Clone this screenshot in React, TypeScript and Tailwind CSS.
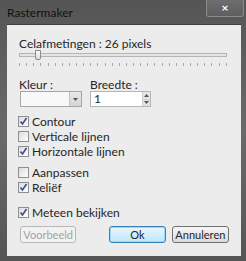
import React from "react";

const font = { fontFamily: 'Lato, "Open Sans", Arial, sans-serif' };

function Check({ checked, label }: { checked: boolean; label: string }) {
  return (
    <div className="flex items-center h-[15px]">
      <div className="w-[11px] h-[11px] border border-[#8e8f8f] bg-gradient-to-br from-[#dcdcdc] to-[#ffffff] flex items-center justify-center">
        {checked && (
          <svg width="9" height="9" viewBox="0 0 9 9">
            <path d="M1.5 4.5 L3.5 7 L7.5 1" stroke="#3b4d8c" strokeWidth="1.6" fill="none" />
          </svg>
        )}
      </div>
      <span className="ml-[3px] text-[12px] leading-[13px] text-[#262626]">{label}</span>
    </div>
  );
}

export default function App() {
  const ticks = Array.from({ length: 30 });
  return (
    <div
      className="w-[246px] h-[261px] bg-gradient-to-b from-[#555555] via-[#6a6a6a] to-[#555555] flex flex-col relative overflow-hidden"
      style={font}
    >
      {/* title bar */}
      <div className="h-[24px] flex items-center pl-[7px]">
        <span className="text-[12px] leading-[14px] text-[#111] mt-[1px]">Rastermaker</span>
      </div>
      {/* close button */}
      <div className="absolute left-[206px] top-0 w-[38px] h-[17px] border border-[#8a8a8a] border-t-0 rounded-b-[3px] bg-gradient-to-b from-[#6e6e6e] to-[#5e5e5e] flex items-center justify-center">
        <span className="text-white text-[12px] font-bold leading-none">×</span>
      </div>
      {/* client */}
      <div className="ml-[7px] mr-[5px] h-[232px] bg-[#ececec] border-t border-[#3e3e3e] flex flex-col px-[12px]">
        <div className="mt-[11px] text-[12px] leading-[15px] text-[#262626]">Celafmetingen : 26 pixels</div>
        {/* slider */}
        <div className="relative -mt-[1px] h-[10px]">
          <div className="absolute left-0 right-[2px] top-[3px] h-[4px] border border-[#b5b5b5] bg-[#e4e4e4]" />
          <div className="absolute left-[16px] top-0 w-[6px] h-[10px] border border-[#8a8a8a] rounded-b-[2px] bg-gradient-to-b from-[#fafafa] to-[#dcdcdc]" />
        </div>
        <div className="flex justify-between mt-[3px] h-[3px] pr-[2px]">
          {ticks.map((_, i) => (
            <div key={i} className="w-px h-[3px] bg-[#a8a8a8]" />
          ))}
        </div>
        {/* Kleur / Breedte */}
        <div className="flex mt-[12px]">
          <div className="w-[71px] flex flex-col">
            <span className="text-[12px] leading-[13px] text-[#262626]">Kleur :</span>
            <div className="ml-[1px] w-[62px] h-[16px] border border-[#a6a6a6] bg-[#f8f8f8] flex justify-end">
              <div className="w-[12px] h-full border-l border-[#c4c4c4] bg-gradient-to-b from-[#e8e8e8] to-[#d4d4d4] flex items-center justify-center">
                <svg width="5" height="3" viewBox="0 0 5 3"><path d="M0 0 L5 0 L2.5 3 Z" fill="#555" /></svg>
              </div>
            </div>
          </div>
          <div className="flex flex-col">
            <span className="text-[12px] leading-[13px] text-[#262626]">Breedte :</span>
            <div className="w-[61px] h-[16px] border border-[#b5b5b5] bg-white flex">
              <span className="flex-1 pl-[3px] text-[12px] leading-[14px] text-[#262626]">1</span>
              <div className="w-[8px] flex flex-col border-l border-[#d0d0d0]">
                <div className="flex-1 bg-[#e6e6e6] border-b border-[#cfcfcf] flex items-center justify-center">
                  <svg width="5" height="3" viewBox="0 0 5 3"><path d="M0 3 L5 3 L2.5 0 Z" fill="#555" /></svg>
                </div>
                <div className="flex-1 bg-[#e2e2e2] flex items-center justify-center">
                  <svg width="5" height="3" viewBox="0 0 5 3"><path d="M0 0 L5 0 L2.5 3 Z" fill="#555" /></svg>
                </div>
              </div>
            </div>
          </div>
        </div>
        {/* checkboxes */}
        <div className="flex flex-col mt-[7px] -ml-[1px]">
          <Check checked label="Contour" />
          <Check checked={false} label="Verticale lijnen" />
          <Check checked label="Horizontale lijnen" />
          <div className="h-[6px]" />
          <Check checked={false} label="Aanpassen" />
          <Check checked label="Reliëf" />
          <div className="h-[10px]" />
          <Check checked label="Meteen bekijken" />
        </div>
        {/* buttons */}
        <div className="flex mt-[6px] ml-[1px]">
          <div className="w-[57px] h-[17px] border border-[#b8b8b8] rounded-[3px] bg-[#f2f2f2] flex items-center justify-center text-[11px] leading-[13px] text-[#a2a2a2]">
            Voorbeeld
          </div>
          <div className="ml-[33px] w-[57px] h-[17px] border border-[#3c7fb1] rounded-[3px] bg-gradient-to-b from-[#eaf6fd] to-[#bee6fd] shadow-[inset_0_0_0_1px_#97d8fb] flex items-center justify-center text-[11px] leading-[13px] text-[#262626]">
            Ok
          </div>
          <div className="ml-[6px] w-[58px] h-[17px] border border-[#707070] rounded-[3px] bg-gradient-to-b from-[#f6f6f6] to-[#dadada] flex items-center justify-center text-[11px] leading-[13px] text-[#262626]">
            Annuleren
          </div>
        </div>
      </div>
    </div>
  );
}
